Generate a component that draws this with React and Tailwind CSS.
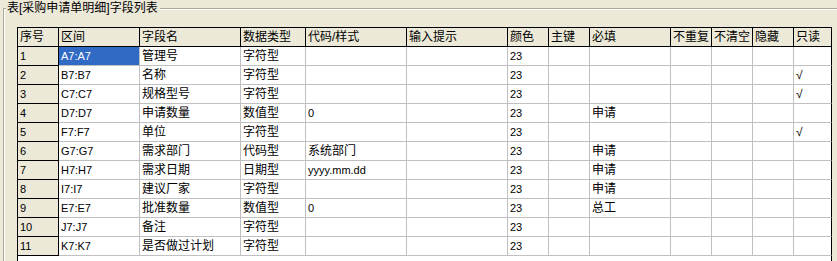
import React from "react";

const COLUMNS = [
  { title: "序号", w: "w-[41px]" },
  { title: "区间", w: "w-[81px]" },
  { title: "字段名", w: "w-[101px]" },
  { title: "数据类型", w: "w-[65px]" },
  { title: "代码/样式", w: "w-[101px]" },
  { title: "输入提示", w: "w-[101px]" },
  { title: "颜色", w: "w-[41px]" },
  { title: "主键", w: "w-[41px]" },
  { title: "必填", w: "w-[81px]" },
  { title: "不重复", w: "w-[41px]" },
  { title: "不清空", w: "w-[41px]" },
  { title: "隐藏", w: "w-[41px]" },
  { title: "只读", w: "w-[38px]" },
];

const ROWS = [
  ["1", "A7:A7", "管理号", "字符型", "", "", "23", "", "", "", "", "", ""],
  ["2", "B7:B7", "名称", "字符型", "", "", "23", "", "", "", "", "", "√"],
  ["3", "C7:C7", "规格型号", "字符型", "", "", "23", "", "", "", "", "", "√"],
  ["4", "D7:D7", "申请数量", "数值型", "0", "", "23", "", "申请", "", "", "", ""],
  ["5", "F7:F7", "单位", "字符型", "", "", "23", "", "", "", "", "", "√"],
  ["6", "G7:G7", "需求部门", "代码型", "系统部门", "", "23", "", "申请", "", "", "", ""],
  ["7", "H7:H7", "需求日期", "日期型", "yyyy.mm.dd", "", "23", "", "申请", "", "", "", ""],
  ["8", "I7:I7", "建议厂家", "字符型", "", "", "23", "", "申请", "", "", "", ""],
  ["9", "E7:E7", "批准数量", "数值型", "0", "", "23", "", "总工", "", "", "", ""],
  ["10", "J7:J7", "备注", "字符型", "", "", "23", "", "", "", "", "", ""],
  ["11", "K7:K7", "是否做过计划", "字符型", "", "", "23", "", "", "", "", "", ""],
];

const isAscii = (s) => /^[\x00-\x7f]*$/.test(s);

function Cell({ col, value, ci, selected }) {
  const size = isAscii(value) ? "text-[11px]" : "text-[12px]";
  let look = "bg-white border-[#C0C0C0] text-black";
  if (ci === 0) look = "bg-[#ECE9D8] border-black text-black";
  if (selected) look = "bg-[#316AC5] border-[#C0C0C0] text-white";
  const right = ci === COLUMNS.length - 1 ? "border-r-black" : "";
  return (
    <div
      className={`${col.w} ${look} ${right} ${size} shrink-0 h-[19px] border-r border-b flex items-center pl-[2px] whitespace-nowrap overflow-hidden`}
    >
      {value}
    </div>
  );
}

export default function App() {
  return (
    <div className="w-[837px] h-[261px] overflow-hidden bg-[#ECE9D8] pl-[3px] flex flex-col font-['Liberation_Sans','Noto_Sans_CJK_SC',sans-serif] text-black">
      {/* group box caption row */}
      <div className="flex h-[16px] shrink-0">
        <div className="w-[3px] mt-[8px] border-t border-l border-[#ACA899] shadow-[inset_1px_1px_0_#ffffff]" />
        <div className="pl-[1px] pr-[2px] text-[12px] leading-[16px] whitespace-nowrap">
          表[采购申请单明细]字段列表
        </div>
        <div className="flex-1 mt-[8px] border-t border-[#ACA899] shadow-[inset_0_1px_0_#ffffff]" />
      </div>

      {/* group box body */}
      <div className="flex-1 border-l border-[#ACA899] shadow-[inset_1px_0_0_#ffffff] pl-[13px] pt-[11px]">
        <div className="w-[815px] h-[240px] border-l border-t border-r border-black bg-white flex flex-col">
          <div className="flex">
            {COLUMNS.map((col) => (
              <div
                key={col.title}
                className={`${col.w} shrink-0 h-[19px] bg-[#ECE9D8] border-r border-b border-black flex items-center pl-[2px] text-[12px] whitespace-nowrap overflow-hidden`}
              >
                {col.title}
              </div>
            ))}
          </div>
          {ROWS.map((row, ri) => (
            <div key={ri} className="flex">
              {row.map((value, ci) => (
                <Cell
                  key={ci}
                  col={COLUMNS[ci]}
                  value={value}
                  ci={ci}
                  selected={ri === 0 && ci === 1}
                />
              ))}
            </div>
          ))}
        </div>
      </div>
    </div>
  );
}
